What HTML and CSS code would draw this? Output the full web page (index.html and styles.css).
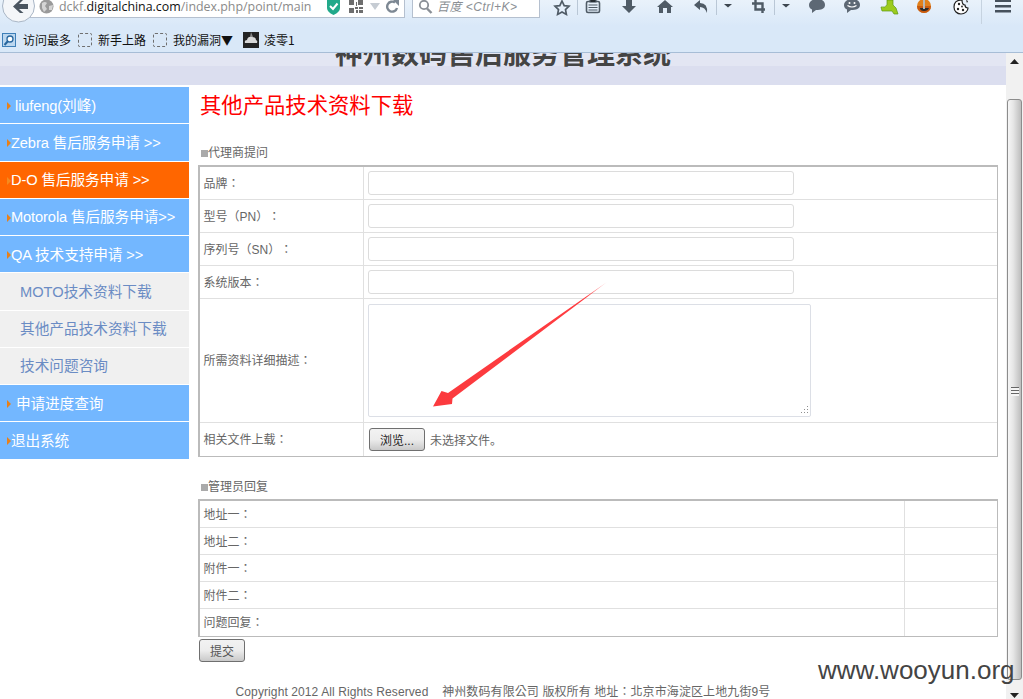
FILE: index.html
```html
<!DOCTYPE html>
<html lang="zh">
<head>
<meta charset="utf-8">
<title>神州数码售后服务管理系统</title>
<link rel="stylesheet" href="styles.css">
</head>
<body>
<div class="chrome">
  <svg class="back" width="38" height="24" viewBox="0 0 38 24">
    <circle cx="18.5" cy="6" r="16" fill="#f4f6f9" stroke="#a9b6c6"/>
    <path d="M13 6.5 L20 0 L23 0 L19 4 H28 V9 H19 L23.5 13 H20 Z" fill="#4a5560"/>
  </svg>
  <div class="toolbar">
    <div class="urlbar">
      <svg class="globe" width="15" height="15" viewBox="0 0 15 15">
        <circle cx="7.5" cy="6.5" r="7" fill="#9a9a9a"/>
        <path d="M3 3 Q6 1 8 3 L6 6 L8 9 L5 12 L3 8 Z M10 6 L14 5 L13 10 L10 10 Z" fill="#d4d4d4"/>
      </svg>
      <span class="url"><span class="dim">dckf.</span>digitalchina.com<span class="dim">/index.php/point/main</span></span>
      <svg class="shield" width="15" height="15" viewBox="0 0 15 15">
        <path d="M1 0 H14 V8 Q14 12 7.5 15 Q1 12 1 8 Z" fill="#22a98a"/>
        <path d="M4 6 L7 9 L11.5 3.5" fill="none" stroke="#fff" stroke-width="2"/>
      </svg>
      <svg class="qr" width="14" height="13" viewBox="0 0 14 13">
        <path d="M0 0 H5 V5 H0 Z M9 0 H14 V5 H9 Z M0 8 H5 V13 H0 Z M7 2 H8 V6 H7 Z M6 7 H9 V9 H6 Z M10 7 H14 V9 H10 Z M7 10 H9 V13 H7 Z M10 10 H14 V13 H10 Z" fill="#6e6e6e"/>
      </svg>
      <svg class="drop" width="12" height="8" viewBox="0 0 12 8"><path d="M1 0 H11 L6 7 Z" fill="#c6ccd3"/></svg>
      <svg class="reload" width="14" height="14" viewBox="0 0 14 14">
        <path d="M11 8 A5 5 0 1 1 9 2.5" fill="none" stroke="#7d8893" stroke-width="2.4"/>
        <path d="M7 0 H13 V6 Z" fill="#7d8893"/>
      </svg>
    </div>
    <div class="searchbar">
      <svg width="15" height="15" viewBox="0 0 15 15">
        <circle cx="6" cy="5" r="4.2" fill="none" stroke="#8a8f96" stroke-width="1.8"/>
        <path d="M9 8.5 L13.5 13" stroke="#8a8f96" stroke-width="2.4"/>
      </svg>
      <span class="search-text">百度 &lt;Ctrl+K&gt;</span>
    </div>
    <div class="tools">
      <svg class="tool star" width="20" height="16" viewBox="0 0 20 16"><path d="M10 1 L12.2 5.6 L17 6.2 L13.5 9.6 L14.4 14.4 L10 12 L5.6 14.4 L6.5 9.6 L3 6.2 L7.8 5.6 Z" fill="none" stroke="#4f5b66" stroke-width="1.7"/></svg>
      <i class="sep s-a"></i>
      <svg class="tool list" width="20" height="16" viewBox="0 0 20 16"><rect x="3.5" y="1.5" width="13" height="11" rx="1.5" fill="none" stroke="#4f5b66" stroke-width="1.6"/><path d="M7 0 H13 V2 H7 Z M5.5 5 H14.500 M5.500 7.500 H14.500 M5.500 10 H14.500" stroke="#4f5b66" stroke-width="1.2"/></svg>
      <svg class="tool" width="20" height="16" viewBox="0 0 20 16"><path d="M7 0 H13 V6 H17 L10 13 L3 6 H7 Z" fill="#4f5b66"/></svg>
      <svg class="tool" width="20" height="16" viewBox="0 0 20 16"><path d="M10 0 L18 7 H16 V13 H12 V8 H8 V13 H4 V7 H2 Z" fill="#4f5b66"/></svg>
      <svg class="tool" width="20" height="16" viewBox="0 0 20 16"><path d="M3 5 L9 0 V3 Q17 3 16 13 Q14 7 9 7 V10 Z" fill="#4f5b66"/></svg>
      <i class="sep s-a"></i>
      <svg class="caret" width="10" height="16" viewBox="0 0 10 16"><path d="M1 4 H9 L5 7.500 Z" fill="#3d4650"/></svg>
      <svg class="tool" width="20" height="16" viewBox="0 0 20 16"><path d="M6.500 0 V9.500 H16 M3 3.500 H13.500 V13" fill="none" stroke="#4f5b66" stroke-width="2.400"/></svg>
      <i class="sep s-a"></i>
      <svg class="caret" width="10" height="16" viewBox="0 0 10 16"><path d="M1 4 H9 L5 7.500 Z" fill="#3d4650"/></svg>
      <svg class="tool" width="20" height="16" viewBox="0 0 20 16"><path d="M10 -1 C16 -1 18 2 18 5 C18 9 14 10 9 10 L5 13 V9.500 C3 8.500 2 7 2 5 C2 2 5 -1 10 -1 Z" fill="#5d6874"/></svg>
      <svg class="tool s-m" width="20" height="16" viewBox="0 0 20 16"><path d="M10 -1 C16 -1 18 2 18 5 C18 9 14 10 9 10 L5 13 V9.500 C3 8.500 2 7 2 5 C2 2 5 -1 10 -1 Z" fill="#5d6874"/><circle cx="7.500" cy="3" r="1" fill="#fff"/><circle cx="12.500" cy="3" r="1" fill="#fff"/><path d="M5.500 5.500 Q10 8.500 14.500 5.500" fill="none" stroke="#fff" stroke-width="1.200"/></svg>
      <svg class="tool s-w" width="20" height="16" viewBox="0 0 20 16"><path d="M8 0 H14 V5 L17 8 L19 14 H15 L13 11 H3 L2 7 Q6 8 8 5 Z" fill="#9ccb1e" stroke="#5c9a12" stroke-width=".7"/></svg>
      <svg class="tool s-m" width="20" height="16" viewBox="0 0 20 16"><circle cx="10" cy="6" r="7" fill="#e0801c"/><path d="M3 6 A7 7 0 0 0 17 6 Z" fill="#c85a10"/><path d="M9 0 H11 V8 H15 Q14 11 10 11 Q6 11 6 8 H9 Z" fill="#2a2a2a"/><path d="M9.300 0 H10.700 V9 H9.300 Z" fill="#f4f4f4"/></svg>
      <svg class="tool s-w" width="20" height="16" viewBox="0 0 20 16"><path d="M11 0 C5 0 3 3 3 7 C3 11 6 14 10 14 C14 14 17 11 17 8 C15 8 14 7 14 5 C12 5 11 3 11 0 Z" fill="#fff" stroke="#222" stroke-width="1.200"/><circle cx="8" cy="4" r="1.200" fill="#222"/><circle cx="7" cy="9" r="1.200" fill="#222"/><circle cx="12" cy="10" r="1.200" fill="#222"/><circle cx="11" cy="6.500" r=".9" fill="#222"/><path d="M15 0 L17 1 L16 3 Z" fill="#222"/></svg>
      <i class="sep s-b"></i>
      <svg class="tool s-h" width="20" height="16" viewBox="0 0 20 16"><path d="M2 0 H18 V2 H2 Z M2 5 H18 V7.500 H2 Z M2 10 H18 V12.500 H2 Z" fill="#46515c"/></svg>
    </div>
  </div>
  <div class="bookmarks">
    <svg class="bm-first" width="15" height="15" viewBox="0 0 15 15"><rect x=".5" y=".5" width="13" height="13" fill="#bcd7ef" stroke="#3e7fb8"/><circle cx="8" cy="6" r="3" fill="#fff" stroke="#27669e" stroke-width="1.300"/><path d="M6 8 L2.500 12" stroke="#27669e" stroke-width="2"/></svg>
    <span class="bm-text">访问最多</span>
    <i class="bm-blank"></i>
    <span class="bm-text">新手上路</span>
    <i class="bm-blank"></i>
    <span class="bm-text">我的漏洞▼</span>
    <svg class="bm-cloud" width="16" height="16" viewBox="0 0 16 16"><rect width="16" height="16" fill="#232323"/><path d="M2 11 Q1 8 4 8 Q5 4 9 5 Q13 5 13 8 Q15 9 14 11 Z" fill="#d8d8d8"/><path d="M8 0 L10 5 H7 Z" fill="#8a8a8a"/></svg>
    <span class="bm-text">凌零1</span>
  </div>
</div>

<div class="page">
  <div class="content">
    <header class="banner"><h2 class="system-name">神州数码售后服务管理系统</h2></header>
    <div class="columns">
      <nav class="sidenav">
        <a class="nav-item nav-user"><span>liufeng(刘峰)</span></a>
        <a class="nav-item"><span>Zebra 售后服务申请 &gt;&gt;</span></a>
        <a class="nav-item nav-active"><span>D-O 售后服务申请 &gt;&gt;</span></a>
        <a class="nav-item"><span>Motorola 售后服务申请&gt;&gt;</span></a>
        <a class="nav-item"><span>QA 技术支持申请 &gt;&gt;</span></a>
        <a class="nav-sub">MOTO技术资料下载</a>
        <a class="nav-sub">其他产品技术资料下载</a>
        <a class="nav-sub">技术问题咨询</a>
        <a class="nav-item nav-query"><span>申请进度查询</span></a>
        <a class="nav-item"><span>退出系统</span></a>
      </nav>
      <main class="main">
        <h1 class="page-title">其他产品技术资料下载</h1>
        <h3 class="section-title first">代理商提问</h3>
        <table class="form-table">
          <tr><td class="label">品牌：</td><td class="field"><input class="text-input" type="text"></td></tr>
          <tr><td class="label">型号（PN）：</td><td class="field"><input class="text-input" type="text"></td></tr>
          <tr><td class="label">序列号（SN）：</td><td class="field"><input class="text-input" type="text"></td></tr>
          <tr><td class="label">系统版本：</td><td class="field"><input class="text-input" type="text"></td></tr>
          <tr class="tall"><td class="label">所需资料详细描述：</td><td class="field"><div class="area-wrap"><textarea class="text-area"></textarea><svg class="area-grip" width="10" height="9" viewBox="0 0 10 9"><path d="M8 0 h1 v1 h-1 Z M8 3 h1 v1 h-1 Z M5 3 h1 v1 h-1 Z M8 6 h1 v1 h-1 Z M5 6 h1 v1 h-1 Z M2 6 h1 v1 h-1 Z" fill="#8f8f8f"/></svg></div></td></tr>
          <tr class="upload"><td class="label">相关文件上载：</td><td class="field"><button class="btn browse" type="button">浏览...</button><span class="no-file">未选择文件。</span></td></tr>
        </table>
        <h3 class="section-title second">管理员回复</h3>
        <table class="reply-table">
          <tr><td>地址一：</td><td class="side"></td></tr>
          <tr><td>地址二：</td><td class="side"></td></tr>
          <tr><td>附件一：</td><td class="side"></td></tr>
          <tr><td>附件二：</td><td class="side"></td></tr>
          <tr><td>问题回复：</td><td class="side"></td></tr>
        </table>
        <button class="btn submit" type="button">提交</button>
      </main>
    </div>
    <footer class="footer">Copyright 2012 All Rights Reserved &nbsp;&nbsp; 神州数码有限公司 版权所有 地址：北京市海淀区上地九街9号</footer>
  </div>
  <div class="scrollbar">
    <svg class="arrow-btn" width="9" height="5" viewBox="0 0 9 5"><path d="M0 5 L4.500 0 L9 5 Z" fill="#222"/></svg>
    <div class="thumb"><i class="grip"></i></div>
    <svg class="arrow-btn" width="9" height="5" viewBox="0 0 9 5"><path d="M0 0 L4.500 5 L9 0 Z" fill="#222"/></svg>
  </div>
</div>

<svg class="red-arrow" width="180" height="130" viewBox="430 280 180 130">
  <defs>
    <linearGradient id="fade" x1="607" y1="282" x2="433" y2="406" gradientUnits="userSpaceOnUse">
      <stop offset="0" stop-color="#ff3c40" stop-opacity=".35"/>
      <stop offset=".12" stop-color="#ff3c40"/>
      <stop offset="1" stop-color="#fb3a3e"/>
    </linearGradient>
  </defs>
  <path d="M607 282 L448 393 L441.500 391 L433 406.500 L452 404 L452.500 398.500 Z" fill="url(#fade)"/>
</svg>
<div class="watermark">www.wooyun.org</div>
</body>
</html>
```
FILE: styles.css
```css
* { box-sizing: border-box; }
html, body { margin: 0; height: 699px; overflow: hidden; background: #fff; }
body { position: relative; font-family: "Liberation Sans", "Noto Sans CJK SC", sans-serif; font-size: 12px; color: #666; }

/* browser chrome */
.chrome { position: relative; height: 53px; background: linear-gradient(#e9f2fb 0, #d9e8f8 26px); border-bottom: 1px solid #a7bdd6; }
.back { position: absolute; left: 0; top: 0; }
.toolbar { display: flex; height: 28px; align-items: flex-start; padding-left: 30px; }
.urlbar { width: 375px; height: 18px; display: flex; align-items: flex-start; background: #fff; border: 1px solid #b5c0cf; border-top: 0; padding-left: 8px; }
.globe { flex: none; }
.url { font-family: "Open Sans", "Noto Sans", sans-serif; font-size: 12.4px; line-height: 14px; color: #111; margin-left: 5px; width: 267px; white-space: nowrap; }
.dim { color: #8a8a8a; }
.shield { flex: none; }
.qr { margin-left: 8px; flex: none; }
.drop { margin-left: 6px; margin-top: 3px; flex: none; }
.reload { flex: none; margin-left: 5px; }
.searchbar { width: 128px; height: 18px; margin-left: 7px; display: flex; align-items: flex-start; background: #fff; border: 1px solid #b5c0cf; border-top: 0; padding-left: 5px; }
.search-text { margin-left: 4px; font-size: 12px; line-height: 14px; letter-spacing: .5px; font-style: italic; color: #8b8f94; white-space: nowrap; }
.tools { display: flex; align-items: flex-start; }
.tool { display: block; flex: none; margin-left: 16px; }
.tool.star { margin-left: 12px; }
.tool.list { margin-left: 5px; }
.tool.s-m { margin-left: 15px; }
.tool.s-w { margin-left: 17px; }
.tool.s-h { margin-left: 11px; }
.sep { flex: none; display: block; width: 1px; height: 15px; background: #b9c7d6; }
.sep.s-a { margin-left: 5px; }
.sep.s-b { margin-left: 10px; height: 24px; background: #c6d3e0; }
.caret { flex: none; display: block; margin-left: 6px; }

.bookmarks { height: 24px; display: flex; align-items: center; padding-left: 2px; font-size: 12px; color: #111; }
.bm-text { white-space: nowrap; margin-left: 6px; line-height: 24px; font-family: "Noto Sans CJK SC", "Liberation Sans", sans-serif; }
.bm-blank { flex: none; width: 14px; height: 14px; margin-left: 7px; border: 1px dashed #6f6f6f; border-radius: 2px; }
.bm-cloud { margin-left: 10px; flex: none; }
.bm-text:last-child { margin-left: 5px; }

/* page */
.page { display: flex; height: 646px; }
.content { flex: 1; min-width: 0; overflow: hidden; }
.banner { height: 32px; margin-bottom: 2px; background: linear-gradient(#e3e6f3 0, #e3e6f3 13px, #dbdeef 13px); overflow: hidden; }
.system-name { margin: -11px 0 0 0; height: 26px; overflow: hidden; text-align: center; font-size: 28px; line-height: 26px; font-weight: bold; color: #444; }
.columns { display: flex; align-items: flex-start; }

.sidenav { width: 189px; flex: none; display: flex; flex-direction: column; gap: 1px; }
.nav-item, .nav-sub { height: 36.25px; padding-bottom: 2px; display: flex; align-items: center; font-size: 14.67px; white-space: nowrap; }
.nav-item { padding-left: 7px; background: #73b7ff; color: #fff; letter-spacing: -.12px; }
.nav-item::before { content: ""; flex: none; margin-top: 4px; border-left: 4px solid #e8801a; border-top: 4px solid transparent; border-bottom: 4px solid transparent; }
.nav-user span { margin-left: 4px; }
.nav-query span { margin-left: 5px; }
.nav-active { background: #ff6600; }
.nav-active::before { border-left-color: #f58a1e; }
.nav-sub { padding-left: 20px; background: #f0f0f0; color: #6b8cc4; }

.main { margin-left: 9px; width: 800px; }
.page-title { margin: 0 0 0 2px; height: 38px; font-size: 21.33px; line-height: 38px; font-weight: normal; color: #f00; }
.section-title { margin: 0; font-size: 12px; line-height: 18px; font-weight: normal; color: #666; padding-left: 3px; display: flex; align-items: center; }
.section-title::before { content: ""; width: 7px; height: 7px; margin-top: 1px; background: #aaa; }
.section-title.first { margin-top: 19px; margin-bottom: 3px; }
.section-title.second { margin-top: 21px; margin-bottom: 3px; }

table { width: 800px; border-collapse: separate; border-spacing: 0; table-layout: fixed; border: 1px solid #bbb; border-top-width: 2px; border-left-width: 2px; }
td { padding: 0 0 2px 3.5px; font-family: "Liberation Sans", "Noto Sans CJK TC", sans-serif; font-feature-settings: "locl" 0; text-spacing-trim: space-all; font-size: 12px; color: #666; vertical-align: middle; border-bottom: 1px solid #e0e0e0; }
tr:last-child td { border-bottom: 0; }
.form-table td { height: 33px; }
.form-table .label { width: 164px; border-right: 1px solid #e0e0e0; }
.form-table .field { padding: 0 0 0 4px; }
.form-table .tall td { height: 124px; }
.form-table .upload td { height: 33px; }
.reply-table td { height: 27px; }
.reply-table .side { width: 93px; border-left: 1px solid #e0e0e0; }

.text-input { display: block; width: 426px; height: 24px; margin: 0; padding: 0 4px; background: #fff; border: 1px solid #dcdcdc; border-radius: 3px; outline: 0; }
.area-wrap { position: relative; width: 443px; height: 113px; }
.text-area { display: block; width: 443px; height: 113px; margin: 0; resize: none; background: #fff; border: 1px solid #dcdfe6; border-radius: 2px; outline: 0; }
.area-grip { position: absolute; right: 2px; bottom: 2px; }
.btn { font-family: "Liberation Sans", "Noto Sans CJK SC", sans-serif; font-size: 12px; background: linear-gradient(#f2f2f2 0, #ececec 50%, #c9c9c9 100%); border: 1px solid #6f6f6f; border-radius: 3px; padding: 0; }
.browse { width: 56px; height: 23px; margin-left: 1px; color: #222; vertical-align: middle; }
.no-file { margin-left: 5px; font-family: "Liberation Sans", "Noto Sans CJK SC", sans-serif; font-feature-settings: normal; color: #666; vertical-align: middle; }
.submit { display: block; width: 46px; height: 23px; margin: 2px 0 0 1px; color: #555; }

.footer { margin-top: 21px; text-align: center; line-height: 18px; font-family: "Liberation Sans", "Noto Sans CJK TC", sans-serif; font-feature-settings: "locl" 0; font-size: 12px; letter-spacing: .1px; color: #666; white-space: nowrap; }

.scrollbar { width: 17px; flex: none; display: flex; flex-direction: column; align-items: center; background: #f1f1f1; }
.arrow-btn { flex: none; margin: 6px 0; }
.thumb { flex: none; width: 15px; height: 581px; margin-top: 29px; margin-bottom: 7px; padding-top: 4px; display: flex; align-items: center; justify-content: center; background: linear-gradient(90deg, #f6f6f6 0, #e6e6e6 40%, #bdbdbd 100%); border: 1px solid #8c8c8c; border-radius: 3px; }
.grip { display: block; width: 8px; height: 9px; background: repeating-linear-gradient(#666 0, #666 1px, #f4f4f4 1px, #f4f4f4 3px); }

/* overlays */
.red-arrow { position: absolute; left: 430px; top: 280px; }
.watermark { position: absolute; left: 818px; top: 655px; font-size: 26px; line-height: 30px; color: #444; white-space: nowrap; }
```
